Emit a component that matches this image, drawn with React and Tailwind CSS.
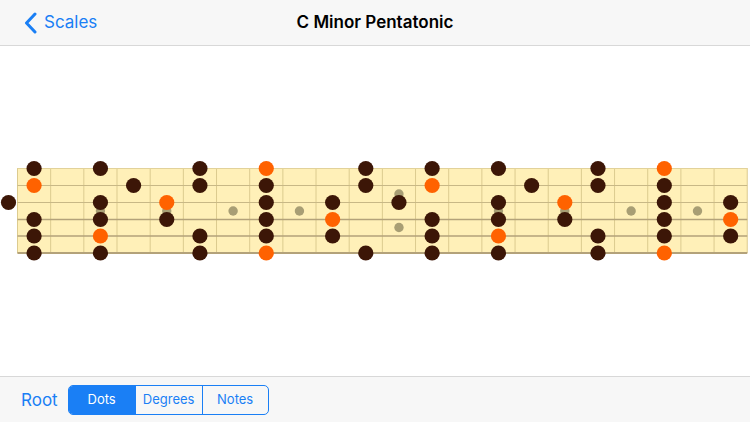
import React from "react";

const STRINGS = [4, 11, 7, 2, 9, 4]; // high E to low E
const STRING_Y = [168.5, 185.5, 202.5, 219.5, 236, 253];
const SCALE = [0, 3, 5, 7, 10];
const LEFT = 17.5;
const FW = 33.17;
const FRETS = 22;

function Fretboard() {
  const dots = [];
  STRINGS.forEach((open, si) => {
    for (let f = 0; f <= FRETS; f++) {
      const n = (open + f) % 12;
      if (!SCALE.includes(n)) continue;
      const x = f === 0 ? 8.5 : LEFT + (f - 0.5) * FW;
      dots.push({ x, y: STRING_Y[si], root: n === 0, key: `${si}-${f}` });
    }
  });
  const inlays = [3, 5, 7, 9, 15, 17, 19, 21];
  const right = LEFT + FRETS * FW;
  return (
    <svg width="750" height="330" viewBox="0 46 750 330" className="block">
      <rect x={LEFT} y={168} width={right - LEFT} height={86} fill="#fff0b8" />
      {Array.from({ length: FRETS + 1 }).map((_, i) => (
        <line key={i} x1={LEFT + i * FW} x2={LEFT + i * FW} y1={168} y2={253} stroke="#dccb8f" strokeWidth="1" />
      ))}
      {inlays.map((f) => (
        <circle key={f} cx={LEFT + (f - 0.5) * FW} cy={211} r="4.7" fill="#a89e74" />
      ))}
      <circle cx={LEFT + 11.5 * FW} cy={194} r="4.7" fill="#a89e74" />
      <circle cx={LEFT + 11.5 * FW} cy={227.5} r="4.7" fill="#a89e74" />
      {STRING_Y.map((y, i) => (
        <line
          key={i}
          x1={LEFT}
          x2={right}
          y1={y}
          y2={y}
          stroke={i === 0 ? "#e2d29a" : i < 3 ? "#c8b886" : "#b3a27a"}
          strokeWidth={i === 0 ? 1 : i < 3 ? 1 : i < 5 ? 1.5 : 2}
        />
      ))}
      {dots.map((d) => (
        <circle key={d.key} cx={d.x} cy={d.y} r="7.6" fill={d.root ? "#ff6200" : "#3c1607"} />
      ))}
    </svg>
  );
}

export default function App() {
  return (
    <div className="w-[750px] h-[422px] flex flex-col bg-white overflow-hidden" style={{ fontFamily: "Inter, 'Noto Sans', sans-serif" }}>
      <div className="h-[46px] bg-[#f7f7f7] border-b border-[#d8d8d8] flex items-center relative shrink-0">
        <div className="flex items-center pl-[24px] gap-[7px] text-[#1a7ff5]">
          <svg width="13" height="22" viewBox="0 0 13 22">
            <path d="M11 2 L2.5 11 L11 20" fill="none" stroke="#1a7ff5" strokeWidth="3" strokeLinecap="round" strokeLinejoin="round" />
          </svg>
          <span className="text-[17px] leading-none">Scales</span>
        </div>
        <div className="absolute inset-0 flex items-center justify-center pointer-events-none">
          <span className="text-[17px] font-semibold text-black leading-none">C Minor Pentatonic</span>
        </div>
      </div>
      <div className="flex-1 relative">
        <Fretboard />
      </div>
      <div className="h-[47px] bg-[#f7f7f7] border-t border-[#d8d8d8] flex items-center pl-[21px] gap-[10px] shrink-0">
        <span className="text-[17px] text-[#1a7ff5] leading-none">Root</span>
        <div className="flex h-[30px] border border-[#1a7ff5] rounded-[5px] overflow-hidden text-[13px] shrink-0">
          <div className="w-[66px] shrink-0 flex items-center justify-center bg-[#1a7ff5] text-white">Dots</div>
          <div className="w-[67px] shrink-0 flex items-center justify-center text-[#1a7ff5] border-l border-[#1a7ff5]">Degrees</div>
          <div className="w-[66px] shrink-0 flex items-center justify-center text-[#1a7ff5] border-l border-[#1a7ff5]">Notes</div>
        </div>
      </div>
    </div>
  );
}
